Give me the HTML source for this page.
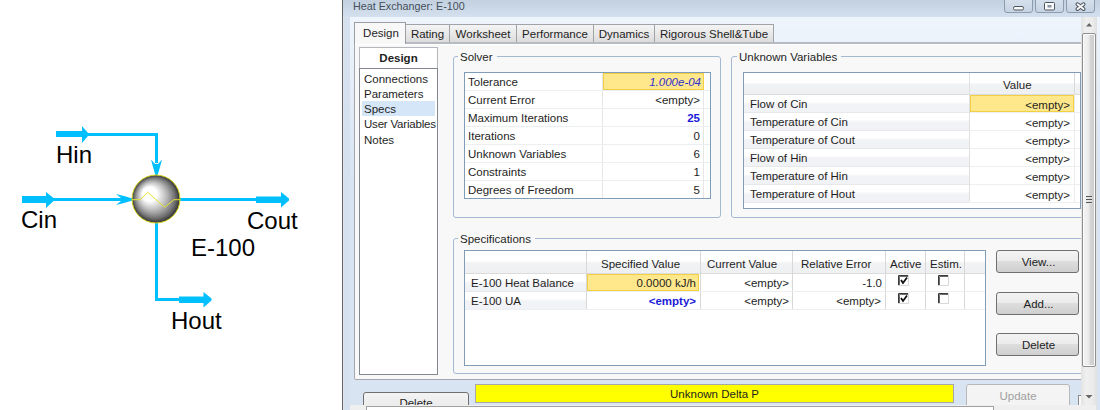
<!DOCTYPE html>
<html><head><meta charset="utf-8">
<style>
*{margin:0;padding:0;box-sizing:border-box}
html,body{width:1100px;height:410px;overflow:hidden;background:#fff}
body{position:relative;font-family:"Liberation Sans",sans-serif;font-size:11.5px;color:#1e1e1e}
.a{position:absolute}
.t{position:absolute;white-space:nowrap;line-height:13px}
#flow{position:absolute;left:0;top:0}
.lbl{position:absolute;font-size:24px;line-height:24px;color:#000;white-space:nowrap}
/* dialog */
#bord{left:342px;top:0;width:1px;height:410px;background:#646464;box-shadow:1px 0 0 #e0e5ee}
#frame{left:343px;top:0;width:757px;height:410px;background:#d5e1ef}
#titlebar{left:343px;top:0;width:757px;height:17px;background:linear-gradient(#c2d0df,#d4e0ee)}
#client{left:350px;top:17px;width:750px;height:393px;background:linear-gradient(#eef5fd 0px,#e6eef8 60px,#d8e4f2 160px,#d8e4f2 393px)}
.wbtn{top:-3px;height:16px;border:1px solid #8c9bad;border-radius:0 0 3px 3px;background:linear-gradient(#d8e2ee,#c6d3e2)}
#panel{left:354px;top:42px;width:740px;height:338px;background:#f8f8f8;border:1px solid #a4a8ae;border-top:2px solid #b6bbc1;border-radius:0 0 2px 2px;box-shadow:inset 0 1px 0 #fff}
.tab{top:24px;height:19px;border:1px solid #a0a4a8;border-bottom:none;background:linear-gradient(#f4f4f4,#e8e8e8 50%,#dadada);text-align:center;line-height:19px}
.tab.act{top:22px;height:22px;background:#f8f8f8;border-color:#9a9ea2;line-height:21px;padding-left:2px}
.grp{border:1px solid #a3b9d3;border-radius:3px}
.gl{position:absolute;background:#f8f8f8;padding:0 4px 0 2px;line-height:13px}
.tbl{border:1px solid #7f9db9;background:#fff}
.rowl{position:absolute;height:1px;background:#eceff2}
.coll{position:absolute;width:1px;background:#e6e6e6}
.yel{position:absolute;background:#ffe88c;border:1px solid #f3cf45}
.btn{position:absolute;border:1px solid #707070;border-radius:3px;background:linear-gradient(#f3f3f3 0%,#ebebeb 49%,#dddddd 50%,#cfcfcf 100%);text-align:center;line-height:21px;color:#1e1e1e}
.hdr{position:absolute;background:linear-gradient(#ffffff 0%,#ffffff 45%,#f1f2f4 55%,#eef0f2 100%)}
.lrow{position:absolute;background:linear-gradient(#ffffff 0%,#ffffff 38%,#f2f3f6 55%,#f1f2f5 100%);border-bottom:1px solid #e6e8ec}
.cb{position:absolute;width:11px;height:11px;border:1px solid #1c1c1c;background:#fff}
</style></head><body>

<svg id="flow" width="340" height="410" viewBox="0 0 340 410">
  <defs>
    <radialGradient id="sph" gradientUnits="userSpaceOnUse" cx="156" cy="199" r="24" fx="147" fy="192">
      <stop offset="0" stop-color="#ffffff"/>
      <stop offset="0.3" stop-color="#ffffff"/>
      <stop offset="0.42" stop-color="#e2e2e2"/>
      <stop offset="0.56" stop-color="#c2c2c2"/>
      <stop offset="0.7" stop-color="#9c9c9c"/>
      <stop offset="0.84" stop-color="#727272"/>
      <stop offset="0.94" stop-color="#4a4a4a"/>
      <stop offset="1" stop-color="#2a2a2a"/>
    </radialGradient>
  </defs>
  <g fill="#00bfff" stroke="none">
    <!-- Hin -->
    <rect x="56" y="131" width="26" height="6"/>
    <polygon points="82,126 88,133 88,136 82,143"/>
    <rect x="88" y="133" width="70" height="3"/>
    <rect x="155" y="133" width="3" height="30"/>
    <polygon points="151,159.5 155,164 158,164 162,159.5 160,167 157.5,175.5 155.5,175.5 153,167"/>
    <!-- Cin -->
    <rect x="22" y="196" width="25" height="7"/>
    <polygon points="46,192 53.5,198 53.5,201 46,208"/>
    <rect x="53" y="198" width="70" height="3"/>
    <polygon points="116,194 121,198 121,201 116,205 124,203 132.5,200.5 132.5,198.5 124,196"/>
    <!-- Cout -->
    <rect x="180" y="198" width="77" height="3"/>
    <rect x="256" y="196.5" width="25" height="6.5"/>
    <polygon points="281,192 289,198.5 289,200.5 281,207.5"/>
    <!-- Hout -->
    <rect x="155" y="222" width="3" height="78"/>
    <rect x="155" y="298" width="25" height="3"/>
    <rect x="179" y="296.5" width="25" height="6.5"/>
    <polygon points="203.5,292 211.5,298.5 211.5,300.5 203.5,307.5"/>
  </g>
  <circle cx="156" cy="199" r="24" fill="url(#sph)" stroke="#d8d820" stroke-width="1"/>
  <polyline points="132,199.7 140.3,199.7 147.6,192.3 164.7,207.3 173.9,199.7 180.2,199.7" fill="none" stroke="#e4e430" stroke-width="1"/>
</svg>
<div class="lbl" style="left:56px;top:143px">Hin</div>
<div class="lbl" style="left:21px;top:208px">Cin</div>
<div class="lbl" style="left:247px;top:209px">Cout</div>
<div class="lbl" style="left:191px;top:236px">E-100</div>
<div class="lbl" style="left:171px;top:309px">Hout</div>

<!-- dialog -->
<div class="a" id="frame"></div>
<div class="a" id="bord"></div>
<div class="a" id="titlebar"></div>
<div class="a" id="client"></div>
<div class="t" style="left:353px;top:0px;font-size:10.75px;color:#444e5a">Heat Exchanger: E-100</div>
<div class="a wbtn" style="left:1004px;width:29px"></div>
<div class="a wbtn" style="left:1035px;width:29px"></div>
<div class="a wbtn" style="left:1066px;width:29px"></div>
<svg class="a" style="left:1000px;top:0" width="100" height="16" viewBox="0 0 100 16">
  <rect x="13.5" y="6.5" width="10" height="3.5" rx="1.5" fill="#fafafa" stroke="#4e5660" stroke-width="1"/>
  <rect x="44.5" y="2.5" width="10" height="7.5" rx="1" fill="#fafafa" stroke="#4e5660" stroke-width="1"/>
  <rect x="47.5" y="5" width="4" height="2.5" fill="#8a95a5"/>
  <path d="M77.5,4.3 L83.5,9 M83.5,4.3 L77.5,9" stroke="#4a525c" stroke-width="4" stroke-linecap="round"/>
  <path d="M77.5,4.3 L83.5,9 M83.5,4.3 L77.5,9" stroke="#f8f8f8" stroke-width="2" stroke-linecap="round"/>
</svg>

<!-- tabs -->
<div class="a tab" style="left:405px;width:45px">Rating</div>
<div class="a tab" style="left:449px;width:68px">Worksheet</div>
<div class="a tab" style="left:516px;width:78px">Performance</div>
<div class="a tab" style="left:593px;width:62px">Dynamics</div>
<div class="a tab" style="left:654px;width:120px">Rigorous Shell&amp;Tube</div>
<div class="a" id="panel"></div>
<div class="a tab act" style="left:354px;width:52px">Design</div>


<!-- nav list -->
<div class="a" style="left:359px;top:47px;width:79px;height:22px;border:1px solid #b4b8bc;border-bottom:none;background:#fff"></div>
<div class="t" style="left:359px;top:52px;width:79px;text-align:center;font-weight:bold;font-size:11.5px">Design</div>
<div class="a" style="left:359px;top:68px;width:79px;height:307px;border:1px solid #828790;background:#fff"></div>
<div class="a" style="left:362px;top:101px;width:73px;height:15px;background:#d5e6f8"></div>
<div class="t" style="left:364px;top:73px">Connections</div>
<div class="t" style="left:364px;top:88px">Parameters</div>
<div class="t" style="left:364px;top:103px">Specs</div>
<div class="t" style="left:364px;top:118px;letter-spacing:-0.2px">User Variables</div>
<div class="t" style="left:364px;top:134px">Notes</div>

<!-- Solver group -->
<div class="a grp" style="left:453px;top:56px;width:268px;height:162px"></div>
<div class="gl" style="left:458px;top:51px">Solver</div>
<div class="a tbl" style="left:464px;top:72px;width:247px;height:127px"></div>
<div class="a coll" style="left:602px;top:73px;height:125px"></div>
<div class="a coll" style="left:703px;top:73px;height:125px"></div>
<div class="a rowl" style="left:465px;top:90px;width:245px"></div>
<div class="a rowl" style="left:465px;top:108px;width:245px"></div>
<div class="a rowl" style="left:465px;top:126px;width:245px"></div>
<div class="a rowl" style="left:465px;top:144px;width:245px"></div>
<div class="a rowl" style="left:465px;top:162px;width:245px"></div>
<div class="a rowl" style="left:465px;top:180px;width:245px"></div>
<div class="yel" style="left:603px;top:73px;width:101px;height:17px"></div>
<div class="t" style="left:468px;top:76px">Tolerance</div>
<div class="t" style="left:468px;top:94px">Current Error</div>
<div class="t" style="left:468px;top:112px">Maximum Iterations</div>
<div class="t" style="left:468px;top:130px">Iterations</div>
<div class="t" style="left:468px;top:148px">Unknown Variables</div>
<div class="t" style="left:468px;top:166px">Constraints</div>
<div class="t" style="left:468px;top:184px">Degrees of Freedom</div>
<div class="t" style="right:399px;top:76px;font-style:italic;color:#3030d0">1.000e-04</div>
<div class="t" style="right:400px;top:94px">&lt;empty&gt;</div>
<div class="t" style="right:400px;top:112px;font-weight:bold;color:#1a1ad8">25</div>
<div class="t" style="right:400px;top:130px">0</div>
<div class="t" style="right:400px;top:148px">6</div>
<div class="t" style="right:400px;top:166px">1</div>
<div class="t" style="right:400px;top:184px">5</div>

<!-- Unknown variables group -->
<div class="a grp" style="left:731px;top:56px;width:361px;height:162px"></div>
<div class="gl" style="left:737px;top:51px">Unknown Variables</div>
<div class="a tbl" style="left:743px;top:72px;width:338px;height:137px"></div>
<div class="hdr" style="left:744px;top:73px;width:336px;height:21px"></div>
<div class="a" style="left:744px;top:94px;width:336px;height:1px;background:#dcdcdc"></div>
<div class="a coll" style="left:969px;top:73px;height:129px;background:#e0e0e0"></div>
<div class="a coll" style="left:1074px;top:73px;height:21px;background:#d8d8d8"></div>
<div class="a coll" style="left:1074px;top:94px;height:108px;background:#ececec"></div>
<div class="lrow" style="left:744px;top:95px;width:225px;height:18px"></div>
<div class="lrow" style="left:744px;top:113px;width:225px;height:18px"></div>
<div class="lrow" style="left:744px;top:131px;width:225px;height:18px"></div>
<div class="lrow" style="left:744px;top:149px;width:225px;height:18px"></div>
<div class="lrow" style="left:744px;top:167px;width:225px;height:18px"></div>
<div class="lrow" style="left:744px;top:185px;width:225px;height:18px"></div>
<div class="a rowl" style="left:970px;top:112px;width:110px"></div>
<div class="a rowl" style="left:970px;top:130px;width:110px"></div>
<div class="a rowl" style="left:970px;top:148px;width:110px"></div>
<div class="a rowl" style="left:970px;top:166px;width:110px"></div>
<div class="a rowl" style="left:970px;top:184px;width:110px"></div>
<div class="a rowl" style="left:970px;top:202px;width:110px"></div>
<div class="yel" style="left:970px;top:95px;width:104px;height:17px"></div>
<div class="t" style="left:1003px;top:79px">Value</div>
<div class="t" style="left:750px;top:98px">Flow of Cin</div>
<div class="t" style="left:750px;top:116px">Temperature of Cin</div>
<div class="t" style="left:750px;top:134px">Temperature of Cout</div>
<div class="t" style="left:750px;top:152px">Flow of Hin</div>
<div class="t" style="left:750px;top:170px">Temperature of Hin</div>
<div class="t" style="left:750px;top:188px">Temperature of Hout</div>
<div class="t" style="right:30px;top:99px">&lt;empty&gt;</div>
<div class="t" style="right:30px;top:117px">&lt;empty&gt;</div>
<div class="t" style="right:30px;top:135px">&lt;empty&gt;</div>
<div class="t" style="right:30px;top:153px">&lt;empty&gt;</div>
<div class="t" style="right:30px;top:171px">&lt;empty&gt;</div>
<div class="t" style="right:30px;top:189px">&lt;empty&gt;</div>

<!-- Specifications group -->
<div class="a grp" style="left:453px;top:238px;width:640px;height:136px"></div>
<div class="gl" style="left:458px;top:233px">Specifications</div>
<div class="a tbl" style="left:464px;top:250px;width:522px;height:116px"></div>
<div class="hdr" style="left:465px;top:251px;width:520px;height:22px"></div>
<div class="a" style="left:465px;top:273px;width:520px;height:1px;background:#dcdcdc"></div>
<div class="lrow" style="left:465px;top:274px;width:121px;height:18px"></div>
<div class="lrow" style="left:465px;top:292px;width:121px;height:18px"></div>
<div class="a coll" style="left:586px;top:251px;height:58px;background:#d8d8d8"></div>
<div class="a coll" style="left:700px;top:251px;height:58px;background:#d8d8d8"></div>
<div class="a coll" style="left:792px;top:251px;height:58px;background:#d8d8d8"></div>
<div class="a coll" style="left:885px;top:251px;height:58px;background:#d8d8d8"></div>
<div class="a coll" style="left:925px;top:251px;height:58px;background:#d8d8d8"></div>
<div class="a coll" style="left:964px;top:251px;height:58px;background:#d8d8d8"></div>
<div class="a rowl" style="left:587px;top:291px;width:398px"></div>
<div class="a rowl" style="left:465px;top:309px;width:520px"></div>
<div class="yel" style="left:587px;top:274px;width:112px;height:17px"></div>
<div class="t" style="left:601px;top:258px">Specified Value</div>
<div class="t" style="left:707px;top:258px">Current Value</div>
<div class="t" style="left:801px;top:258px">Relative Error</div>
<div class="t" style="left:890px;top:258px">Active</div>
<div class="t" style="left:930px;top:258px">Estim.</div>
<div class="t" style="left:471px;top:277px">E-100 Heat Balance</div>
<div class="t" style="left:471px;top:295px">E-100 UA</div>
<div class="t" style="right:404px;top:277px">0.0000 kJ/h</div>
<div class="t" style="right:404px;top:295px;font-weight:bold;color:#1a1ad8">&lt;empty&gt;</div>
<div class="t" style="right:311px;top:277px">&lt;empty&gt;</div>
<div class="t" style="right:311px;top:295px">&lt;empty&gt;</div>
<div class="t" style="right:218px;top:277px">-1.0</div>
<div class="t" style="right:219px;top:295px">&lt;empty&gt;</div>
<svg class="a" style="left:896px;top:273px" width="56" height="34" viewBox="0 0 56 34">
  <g id="cbx">
    <rect x="2" y="2" width="11" height="11" fill="#fff"/>
    <path d="M2.5,13 V2.5 H13" fill="none" stroke="#3a3a3a" stroke-width="1"/>
    <path d="M3.5,12 V3.5 H12" fill="none" stroke="#6a6a6a" stroke-width="1"/>
    <path d="M2,12.5 H12.5 V2" fill="none" stroke="#d8d8d8" stroke-width="1"/>
  </g>
  <use href="#cbx" x="40" y="0"/>
  <use href="#cbx" x="0" y="18"/>
  <use href="#cbx" x="40" y="18"/>
  <path d="M5,7 L7,10 L11,4.5" fill="none" stroke="#111" stroke-width="1.8"/>
  <path d="M5,25 L7,28 L11,22.5" fill="none" stroke="#111" stroke-width="1.8"/>
</svg>
<div class="btn" style="left:996px;top:250px;width:83px;height:23px;line-height:23px;padding-left:2px">View...</div>
<div class="btn" style="left:996px;top:292px;width:83px;height:23px;line-height:23px;padding-left:2px">Add...</div>
<div class="btn" style="left:996px;top:333px;width:83px;height:23px;line-height:23px;padding-left:2px">Delete</div>

<!-- scrollbar -->
<div class="a" style="left:1078px;top:395px;width:12px;height:20px;border:1px solid #8a8a8a;border-right:none;background:#fafafa"></div>
<div class="a" style="left:1081px;top:17px;width:16px;height:393px;background:linear-gradient(90deg,#e2e2e2,#efefef 30%,#ececec 70%,#e0e0e0)"></div>
<div class="a" style="left:1082px;top:33px;width:14px;height:334px;border:1px solid #8e8f8f;border-radius:2px;box-shadow:inset 0 0 0 1px #fbfbfb;background:linear-gradient(90deg,#f4f4f4,#ececec 45%,#d6d6d6 60%,#c9c9c9)"></div>
<div class="a" style="left:1086px;top:196px;width:6px;height:1px;background:#555;box-shadow:0 3px 0 #555,0 6px 0 #555,0 1px 0 #e8e8e8,0 4px 0 #e8e8e8,0 7px 0 #e8e8e8"></div>
<svg class="a" style="left:1084px;top:21px" width="10" height="8" viewBox="0 0 10 8"><polygon points="2,5.6 5.2,2 8,5.6" fill="#666"/></svg>
<svg class="a" style="left:1084px;top:392px" width="10" height="8" viewBox="0 0 10 8"><polygon points="1.5,3 8.5,3 5,6.6" fill="#666"/></svg>
<!-- bottom bar -->
<div class="btn" style="left:363px;top:392px;width:106px;height:30px;line-height:20px">Delete</div>
<div class="a" style="left:475px;top:384px;width:479px;height:19px;background:#ffff00;border:1px solid #a8a8a8;text-align:center;line-height:19px">Unknown Delta P</div>
<div class="btn" style="left:966px;top:384px;width:104px;height:30px;line-height:23px;color:#a0a0a0;border-color:#b8b8b8;background:#f4f4f4">Update</div>
<div class="a" style="left:350px;top:405px;width:746px;height:5px;background:#efefef"></div>
<div class="a" style="left:366px;top:406px;width:628px;height:6px;background:#fff;border:1px solid #a0a0a0"></div>

</body></html>
